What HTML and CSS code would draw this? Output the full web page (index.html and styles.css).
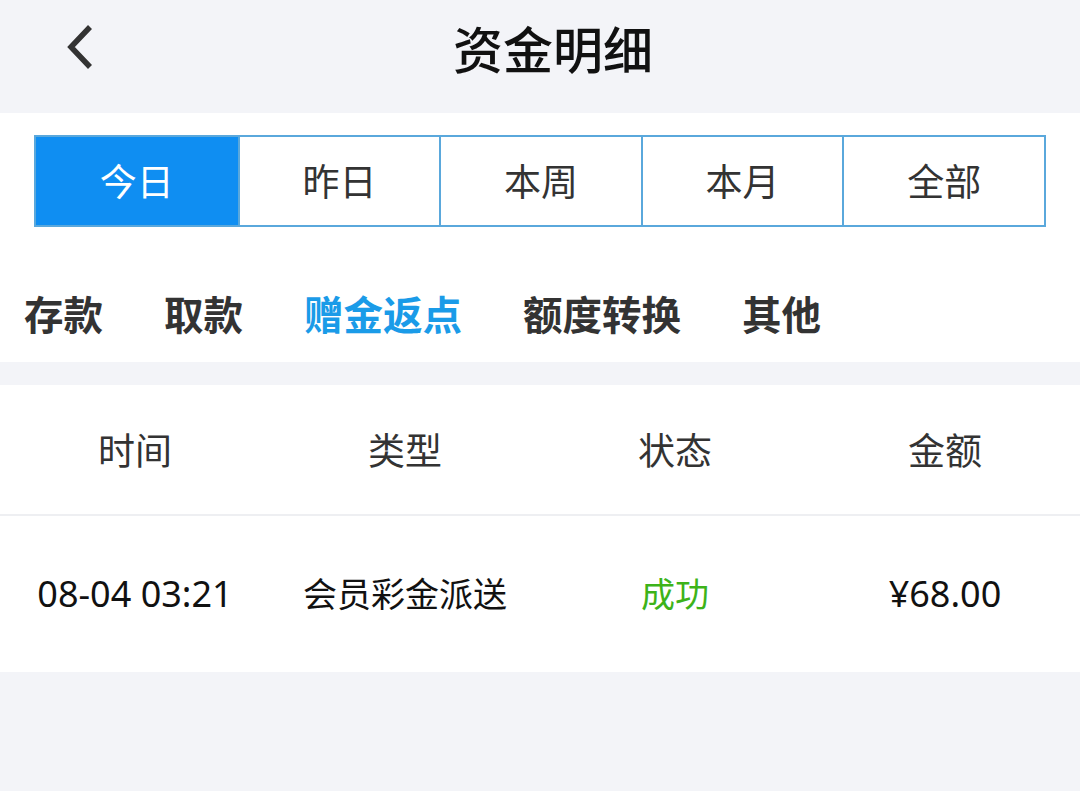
FILE: index.html
```html
<!DOCTYPE html>
<html lang="zh">
<head>
<meta charset="utf-8">
<link rel="stylesheet" href="styles.css">
</head>
<body>
<div class="page">
  <header class="topbar">
    <span class="back">
      <svg width="32" height="46" viewBox="0 0 32 46"><path d="M26 3 L7 23 L26 43" fill="none" stroke="#333" stroke-width="5.5" stroke-linecap="butt" stroke-linejoin="miter"/></svg>
    </span>
    <h1 class="title">资金明细</h1>
  </header>
  <section class="filters">
    <div class="seg">
      <div class="seg-item active">今日</div>
      <div class="seg-item">昨日</div>
      <div class="seg-item">本周</div>
      <div class="seg-item">本月</div>
      <div class="seg-item">全部</div>
    </div>
    <nav class="tabs">
      <span class="tab">存款</span>
      <span class="tab">取款</span>
      <span class="tab on">赠金返点</span>
      <span class="tab">额度转换</span>
      <span class="tab">其他</span>
    </nav>
  </section>
  <section class="table">
    <div class="row head">
      <div class="cell">时间</div>
      <div class="cell">类型</div>
      <div class="cell">状态</div>
      <div class="cell">金额</div>
    </div>
    <div class="row data">
      <div class="cell num">08-04 03:21</div>
      <div class="cell">会员彩金派送</div>
      <div class="cell ok">成功</div>
      <div class="cell num">¥68.00</div>
    </div>
  </section>
</div>
</body>
</html>
```
FILE: styles.css
```css
html, body {
  margin: 0;
  padding: 0;
  background: #f3f4f8;
  font-family: "Noto Sans CJK SC", "Noto Sans", sans-serif;
}
.page {
  width: 1080px;
  min-height: 791px;
  background: #f3f4f8;
}
.topbar {
  position: relative;
  height: 113px;
  display: flex;
  align-items: center;
  justify-content: center;
}
.back {
  position: absolute;
  left: 64px;
  top: 24px;
  display: block;
}
.back svg { display: block; }
.title {
  margin: 0;
  font-size: 50px;
  font-weight: 500;
  color: #111;
  line-height: 1;
  margin-left: 26px;
  margin-top: -20px;
}
.filters {
  background: #fff;
  padding: 22px 0 0;
  height: 227px;
}
.seg {
  margin: 0 34px;
  height: 92px;
  display: grid;
  grid-template-columns: repeat(5, 1fr);
  border: 2px solid #5aa8dc;
  box-sizing: border-box;
}
.seg-item {
  display: flex;
  align-items: center;
  justify-content: center;
  font-size: 37px;
  color: #333;
  border-left: 2px solid #5aa8dc;
  padding-bottom: 3px;
}
.seg-item:first-child { border-left: none; }
.seg-item.active {
  background: #0f8ef2;
  color: #fff;
}
.tabs {
  display: flex;
  gap: 61px;
  padding-left: 24px;
  margin-top: 66px;
  line-height: 1;
}
.tab {
  font-size: 39.5px;
  font-weight: 700;
  color: #333;
}
.tab.on { color: #1a9be8; }
.table {
  margin-top: 23px;
  background: #fff;
}
.row {
  display: grid;
  grid-template-columns: repeat(4, 1fr);
}
.cell {
  text-align: center;
  display: flex;
  align-items: center;
  justify-content: center;
}
.row.head {
  height: 129px;
  border-bottom: 2px solid #eeeff2;
  font-size: 37px;
  color: #333;
}
.row.head .cell { padding-bottom: 2px; }
.row.data {
  height: 156px;
  font-size: 34px;
  color: #111;
  font-family: "Noto Sans", "Noto Sans CJK SC", sans-serif;
}
.row.data .cell { padding-bottom: 4px; }
.row.data .cell.num {
  font-size: 36px;
  padding-bottom: 2px;
}
.cell.ok { color: #3db319; }
```
